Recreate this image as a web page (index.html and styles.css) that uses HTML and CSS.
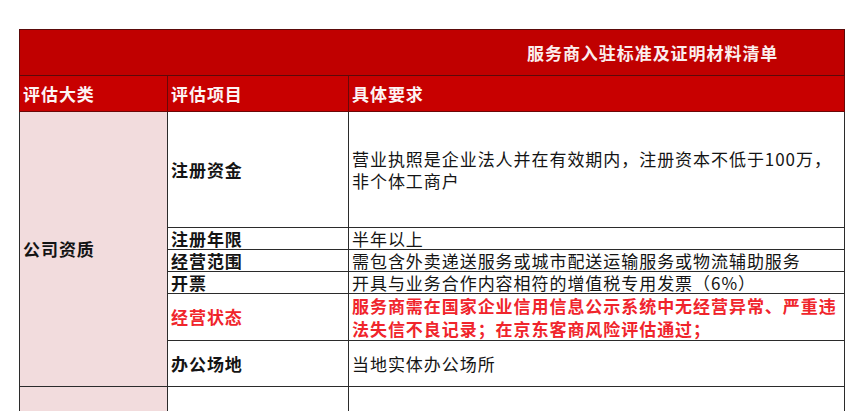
FILE: index.html
```html
<!DOCTYPE html>
<html lang="zh-CN">
<head>
<meta charset="utf-8">
<title>服务商入驻标准及证明材料清单</title>
<link rel="stylesheet" href="styles.css">
</head>
<body>
<div class="sheet">
  <table class="grid">
    <colgroup>
      <col class="c1">
      <col class="c2">
      <col class="c3">
    </colgroup>
    <tr class="r-title">
      <td class="title" colspan="3">服务商入驻标准及证明材料清单</td>
    </tr>
    <tr class="r-head">
      <td class="head">评估大类</td>
      <td class="head">评估项目</td>
      <td class="head">具体要求</td>
    </tr>
    <tr class="r-tall">
      <td class="cat" rowspan="6">公司资质</td>
      <td class="item">注册资金</td>
      <td class="req">营业执照是企业法人并在有效期内，注册资本不低于100万，<br>非个体工商户</td>
    </tr>
    <tr class="r-small">
      <td class="item">注册年限</td>
      <td class="req">半年以上</td>
    </tr>
    <tr class="r-small">
      <td class="item">经营范围</td>
      <td class="req">需包含外卖递送服务或城市配送运输服务或物流辅助服务</td>
    </tr>
    <tr class="r-small">
      <td class="item">开票</td>
      <td class="req">开具与业务合作内容相符的增值税专用发票（6%）</td>
    </tr>
    <tr class="r-mid">
      <td class="item alert">经营状态</td>
      <td class="req alert">服务商需在国家企业信用信息公示系统中无经营异常、严重违法失信不良记录；在京东客商风险评估通过；</td>
    </tr>
    <tr class="r-mid">
      <td class="item">办公场地</td>
      <td class="req">当地实体办公场所</td>
    </tr>
    <tr class="r-next">
      <td class="cat"></td>
      <td class="req"></td>
      <td class="req"></td>
    </tr>
  </table>
</div>
</body>
</html>
```

FILE: styles.css
```css
html, body {
  margin: 0;
  padding: 0;
  background: #ffffff;
  overflow: hidden;
}

body {
  font-family: "Noto Sans CJK SC", "Noto Sans", "Liberation Sans", sans-serif;
  color: #141414;
}

.sheet {
  padding: 29px 0 0 19px;
  width: 846px;
  height: 411px;
  box-sizing: border-box;
  overflow: hidden;
}

.grid {
  border-collapse: collapse;
  table-layout: fixed;
  width: 825px;
}

.c1 { width: 148px; }
.c2 { width: 181px; }
.c3 { width: 496px; }

.grid td {
  border: 1px solid #2b2b2b;
  padding: 0 0 0 3px;
  font-size: 17px;
  letter-spacing: 0.95px;
  line-height: 22px;
  vertical-align: middle;
  white-space: nowrap;
  overflow: hidden;
}

.r-title { height: 46px; }
.r-head { height: 36px; }
.r-tall { height: 116px; }
.r-small { height: 22px; }
.r-mid { height: 46px; }
.r-next { height: 40px; }

.grid .title {
  background: #c00000;
  color: #fbeeee;
  font-weight: 700;
  padding-left: 507px;
  border-color: #5a0a0a;
}

.grid .head {
  background: #c80000;
  color: #fdf3f3;
  font-weight: 700;
  border-color: #6a0808;
}

.grid .cat {
  background: #f2dcdd;
  font-weight: 700;
}

.grid .item {
  font-weight: 700;
}

.grid .req {
  white-space: normal;
  word-break: break-all;
}

.grid .r-small td {
  line-height: 21px;
  vertical-align: bottom;
}

.grid .alert {
  color: #f0252c;
  font-weight: 700;
}

.grid .req.alert {
  line-height: 23px;
}
```
